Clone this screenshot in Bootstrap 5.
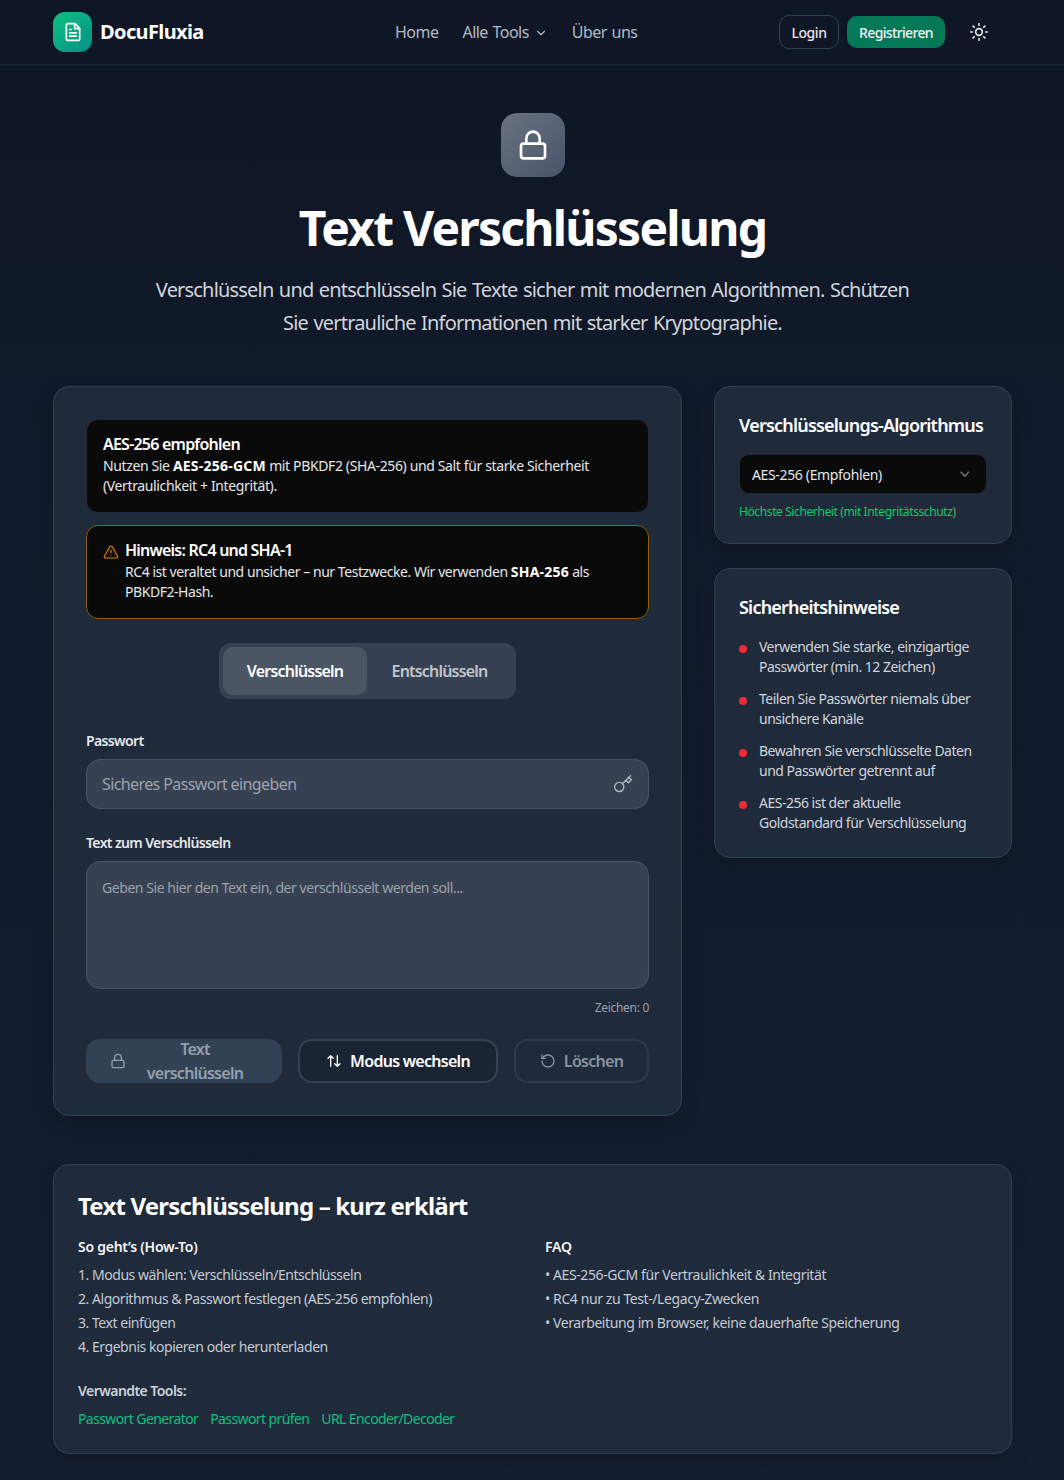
<!DOCTYPE html>
<html lang="de">
<head>
<meta charset="utf-8">
<title>Text Verschlüsselung</title>
<link href="https://cdn.jsdelivr.net/npm/bootstrap@5.3.0/dist/css/bootstrap.min.css" rel="stylesheet">
<style>
html,body{background:#111a2b}
body{font-family:"Noto Sans","Open Sans",sans-serif;color:#fff;background:linear-gradient(180deg,#0f1626 0,#111a2a 30%,#151e30 100%);min-height:1480px;font-size:16px}
svg{display:block;fill:none;stroke:currentColor;stroke-width:2;stroke-linecap:round;stroke-linejoin:round;flex:none}
.topbar{height:65px;border-bottom:1px solid #1e293b;padding:0 53px;background:#0f1626}
.topbar-in{width:100%;height:64px}
.logo-box{width:39px;height:40px;border-radius:12px;background:linear-gradient(135deg,#10c080,#059086);color:#fff}
.brand-txt{font-size:20px;font-weight:700;color:#fff;letter-spacing:-.62px;margin-left:8px}
.mainlinks{position:absolute;left:395px;top:0;height:64px;gap:24px}
.mainlinks .nav-link{padding:0;color:#b4bac4;font-size:16px;letter-spacing:-.52px;word-spacing:1px}
.chev{width:14px;height:14px;margin-left:5px;margin-top:1px}
.btn-login,.btn-reg{font-size:14px;font-weight:500;padding:0;display:flex;align-items:center;justify-content:center}
.btn-login{width:60px;height:34px;border:1px solid #334155;border-radius:10px;color:#e5e7eb;background:transparent;letter-spacing:-.45px}
.btn-reg{width:98px;height:32px;border:0;border-radius:10px;background:#047857;color:#f3f4f6;letter-spacing:-.65px}
.sun-btn{color:#e5e7eb;margin-left:16px;margin-right:22px}
.hero-wrap{padding-top:48px;padding-left:1px;text-align:center}
.hero-ic{width:64px;height:64px;border-radius:16px;background:linear-gradient(135deg,#6b7280,#475569);margin:0 auto;color:#fff}
.hero-h{font-size:48px;line-height:48px;font-weight:700;margin:27px 0 0;letter-spacing:-1.77px;color:#fff}
.hero-p{font-size:20px;line-height:33px;color:#d1d5db;width:780px;margin:21px auto 0;letter-spacing:-.81px;word-spacing:1px}
.layout{padding:0 52px 0 53px;margin-top:47px;gap:32px}
.panel{background:#1f2a3b;border:1px solid #334155;border-radius:16px;box-shadow:0 8px 20px rgba(0,0,0,.18);color:#fff}
.main-panel{width:629px;height:730px;padding:32px}
.side-col{width:298px;gap:24px}
.info-box{background:#0a0a0a;border:1px solid #1f2937;border-radius:12px;padding:14px 16px;font-size:14px;line-height:20px;color:#e5e7eb;letter-spacing:-.37px;margin-bottom:12px;height:94px}
.info-box b{color:#fff;font-weight:700;letter-spacing:.22px}
.info-warn{border-color:#8a6100;display:flex;gap:6px;margin-bottom:24px;letter-spacing:-.45px}
.info-title{font-size:16px;line-height:20px;font-weight:600;color:#fff;margin-bottom:2px;letter-spacing:-.78px}
.warn-ic{color:#d97706;width:16px;height:16px;margin-top:4px;stroke-width:1.8}
.seg{background:#374151;border-radius:12px;padding:4px;width:297px;height:56px;margin:0 auto 32px}
.seg-btn{height:48px;border:0;border-radius:10px;padding:0;font-weight:600;font-size:16px;letter-spacing:-.8px;background:transparent;color:#c0c5ce}
.seg-on{width:144px;background:#4b5563;color:#fff}
.seg-off{width:145px}
.fld-label{display:block;font-size:14px;line-height:20px;font-weight:600;color:#e5e7eb;margin-bottom:8px;letter-spacing:-.63px}
.fld-input.form-control{background:#374151;border:1px solid #475569;border-radius:14px;color:#fff;height:50px;padding:0 48px 0 15px;font-size:16px;letter-spacing:-.6px}
.fld-input.form-control::placeholder{color:#9ca3af;opacity:1}
.key-ic{position:absolute;right:16px;top:15px;color:#b4bac4;stroke-width:1.7}
.fld-area.form-control{background:#374151;border:1px solid #475569;border-radius:14px;height:128px;padding:16px 15px;font-size:14px;line-height:20px;resize:none;letter-spacing:-.44px}
.fld-area.form-control::placeholder{color:#9ca3af;opacity:1}
.count{font-size:12px;line-height:16px;color:#9ca3af;text-align:right;margin-top:11px;margin-bottom:23px;letter-spacing:-.3px}
.act{height:44px;border-radius:14px;font-size:16px;font-weight:600;letter-spacing:-.72px;display:flex;align-items:center;padding:0;line-height:24px}
.act-lock{width:196px;background:#334155;color:#94a0ad;border:0;padding:0 34px 0 24px;gap:16px;overflow:visible}
.act-lock span{flex:1;text-align:center;min-width:0}
.act-mode{width:200px;border:2px solid #374151;background:#1a2433;color:#fff;justify-content:center;gap:8px}
.act-clear{width:135px;border:2px solid #2f3a4c;background:transparent;color:#8a93a0;justify-content:center;gap:8px}
.side-card{padding:24px}
.algo-card{padding-bottom:23px}
.side-h{font-size:18px;line-height:28px;font-weight:600;color:#fff;margin:0 0 16px;letter-spacing:-.8px;white-space:nowrap}
.algo-card .side-h{margin-bottom:15px}
.algo.form-select{height:40px;background-color:#0a0a0a;border:1px solid #1f2937;border-radius:10px;color:#e5e7eb;font-size:14px;padding:0 12px;letter-spacing:-.35px;background-image:url("data:image/svg+xml,%3csvg xmlns='http://www.w3.org/2000/svg' viewBox='0 0 16 16'%3e%3cpath fill='none' stroke='%23777' stroke-linecap='round' stroke-linejoin='round' stroke-width='1.6' d='m3.5 6 4.500 4.500L12 6'/%3e%3c/svg%3e");background-size:14px 14px;background-position:right 14px center}
.algo-note{font-size:12px;line-height:16px;color:#14cc68;margin-top:10px;letter-spacing:-.39px}
.tips{list-style:none;padding:0;margin:0;display:flex;flex-direction:column;gap:12px}
.tips li{position:relative;padding-left:20px;font-size:14px;line-height:20px;color:#d1d5db;letter-spacing:-.5px}
.tips li::before{content:"";position:absolute;left:0;top:8px;width:8px;height:8px;border-radius:50%;background:#ef2b3a}
.explain{margin:48px 52px 0 53px;padding:24px;height:290px}
.explain-h{font-size:24px;line-height:32px;font-weight:700;margin:1px 0 15px;letter-spacing:-.81px;color:#fff}
.exp-grid{display:grid;grid-template-columns:443px 443px;column-gap:24px}
.exp-sub{font-size:14px;line-height:20px;font-weight:600;color:#f3f4f6;margin-bottom:6px;letter-spacing:-.25px}
.exp-list{list-style:none;padding:0;margin:0;font-size:14px;line-height:24px;color:#c5cbd3;letter-spacing:-.46px}
.exp-faq{letter-spacing:-.41px}
.exp-tools{font-size:14px;line-height:20px;font-weight:600;color:#cbd2da;margin:22px 0 6px;letter-spacing:-.55px}
.exp-links{display:flex;gap:12px;font-size:14px;line-height:24px;letter-spacing:-.6px}
.exp-links a{color:#10c07d;text-decoration:none}
</style>
</head>
<body>
<header class="topbar position-relative">
  <nav class="topbar-in d-flex align-items-center">
    <a class="d-flex align-items-center text-decoration-none" href="#">
      <span class="logo-box d-flex align-items-center justify-content-center">
        <svg width="20" height="20" viewBox="0 0 24 24"><path d="M14.500 2H6a2 2 0 0 0-2 2v16a2 2 0 0 0 2 2h12a2 2 0 0 0 2-2V7.500L14.500 2z"/><path d="M14 2v6h6"/><path d="M16 13H8M16 17H8M10 9H8"/></svg>
      </span>
      <span class="brand-txt">DocuFluxia</span>
    </a>
    <div class="mainlinks nav d-flex align-items-center">
      <a class="nav-link" href="#">Home</a>
      <a class="nav-link d-flex align-items-center" href="#">Alle Tools<svg class="chev" viewBox="0 0 24 24"><path d="m6 9 6 6 6-6"/></svg></a>
      <a class="nav-link" href="#">Über uns</a>
    </div>
    <div class="ms-auto d-flex align-items-center gap-2">
      <button class="btn btn-login" type="button">Login</button>
      <button class="btn btn-reg" type="button">Registrieren</button>
      <span class="sun-btn"><svg width="20" height="20" viewBox="0 0 24 24" stroke-width="1.800"><circle cx="12" cy="12" r="4"/><path d="M12 2v2M12 20v2M4.930 4.930l1.410 1.410M17.660 17.660l1.410 1.410M2 12h2M20 12h2M6.340 17.660l-1.410 1.410M19.070 4.930l-1.410 1.410"/></svg></span>
    </div>
  </nav>
</header>

<section class="hero-wrap">
  <div class="hero-ic d-flex align-items-center justify-content-center">
    <svg width="32" height="32" viewBox="0 0 24 24"><rect x="3" y="11" width="18" height="11" rx="2"/><path d="M7 11V7a5 5 0 0 1 10 0v4"/></svg>
  </div>
  <h1 class="hero-h">Text Verschlüsselung</h1>
  <p class="hero-p">Verschlüsseln und entschlüsseln Sie Texte sicher mit modernen Algorithmen. Schützen Sie vertrauliche Informationen mit starker Kryptographie.</p>
</section>

<div class="layout d-flex align-items-start">
  <main class="panel main-panel">
    <div class="info-box">
      <div class="info-title">AES-256 empfohlen</div>
      <span>Nutzen Sie </span><b>AES-256-GCM</b><span> mit PBKDF2 (SHA-256) und Salt für starke Sicherheit</span><br>
      <span>(Vertraulichkeit + Integrität).</span>
    </div>
    <div class="info-box info-warn">
      <svg class="warn-ic" viewBox="0 0 24 24"><path d="m21.730 18-8-14a2 2 0 0 0-3.480 0l-8 14A2 2 0 0 0 4 21h16a2 2 0 0 0 1.730-3Z"/><path d="M12 9v4M12 17h.01"/></svg>
      <div>
        <div class="info-title">Hinweis: RC4 und SHA-1</div>
        <span>RC4 ist veraltet und unsicher – nur Testzwecke. Wir verwenden </span><b>SHA-256</b><span> als</span><br>
        <span>PBKDF2-Hash.</span>
      </div>
    </div>
    <div class="seg d-flex">
      <button class="seg-btn seg-on" type="button">Verschlüsseln</button>
      <button class="seg-btn seg-off" type="button">Entschlüsseln</button>
    </div>
    <label class="fld-label" for="pw">Passwort</label>
    <div class="position-relative mb-4">
      <input id="pw" class="form-control fld-input" type="password" placeholder="Sicheres Passwort eingeben">
      <svg class="key-ic" width="20" height="20" viewBox="0 0 24 24"><path d="m21 2-2 2m-7.610 7.610a5.500 5.500 0 1 1-7.778 7.778 5.500 5.500 0 0 1 7.777-7.777zm0 0L15.500 7.500m0 0 3 3L22 7l-3-3m-3.500 3.500L19 4"/></svg>
    </div>
    <label class="fld-label" for="tx">Text zum Verschlüsseln</label>
    <textarea id="tx" class="form-control fld-area" placeholder="Geben Sie hier den Text ein, der verschlüsselt werden soll..."></textarea>
    <div class="count">Zeichen: 0</div>
    <div class="d-flex gap-3">
      <button class="act act-lock" type="button"><svg width="16" height="16" viewBox="0 0 24 24"><rect x="3" y="11" width="18" height="11" rx="2"/><path d="M7 11V7a5 5 0 0 1 10 0v4"/></svg><span>Text verschlüsseln</span></button>
      <button class="act act-mode" type="button"><svg width="16" height="16" viewBox="0 0 24 24"><path d="m21 16-4 4-4-4M17 20V4M3 8l4-4 4 4M7 4v16"/></svg>Modus wechseln</button>
      <button class="act act-clear" type="button"><svg width="16" height="16" viewBox="0 0 24 24"><path d="M3 12a9 9 0 1 0 9-9 9.750 9.750 0 0 0-6.740 2.740L3 8"/><path d="M3 3v5h5"/></svg>Löschen</button>
    </div>
  </main>
  <aside class="side-col d-flex flex-column">
    <div class="panel side-card algo-card">
      <h2 class="side-h">Verschlüsselungs-Algorithmus</h2>
      <select class="form-select algo"><option>AES-256 (Empfohlen)</option></select>
      <div class="algo-note">Höchste Sicherheit (mit Integritätsschutz)</div>
    </div>
    <div class="panel side-card">
      <h2 class="side-h">Sicherheitshinweise</h2>
      <ul class="tips">
        <li>Verwenden Sie starke, einzigartige Passwörter (min. 12 Zeichen)</li>
        <li>Teilen Sie Passwörter niemals über unsichere Kanäle</li>
        <li>Bewahren Sie verschlüsselte Daten und Passwörter getrennt auf</li>
        <li>AES-256 ist der aktuelle Goldstandard für Verschlüsselung</li>
      </ul>
    </div>
  </aside>
</div>

<section class="panel explain">
  <h2 class="explain-h">Text Verschlüsselung – kurz erklärt</h2>
  <div class="exp-grid">
    <div>
      <div class="exp-sub">So geht’s (How-To)</div>
      <ul class="exp-list">
        <li>1. Modus wählen: Verschlüsseln/Entschlüsseln</li>
        <li>2. Algorithmus &amp; Passwort festlegen (AES-256 empfohlen)</li>
        <li>3. Text einfügen</li>
        <li>4. Ergebnis kopieren oder herunterladen</li>
      </ul>
    </div>
    <div>
      <div class="exp-sub">FAQ</div>
      <ul class="exp-list exp-faq">
        <li>• AES-256-GCM für Vertraulichkeit &amp; Integrität</li>
        <li>• RC4 nur zu Test-/Legacy-Zwecken</li>
        <li>• Verarbeitung im Browser, keine dauerhafte Speicherung</li>
      </ul>
    </div>
  </div>
  <div class="exp-tools">Verwandte Tools:</div>
  <div class="exp-links">
    <a href="#">Passwort Generator</a>
    <a href="#">Passwort prüfen</a>
    <a href="#">URL Encoder/Decoder</a>
  </div>
</section>
<script src="https://cdn.jsdelivr.net/npm/bootstrap@5.3.0/dist/js/bootstrap.bundle.min.js"></script>
</body>
</html>
